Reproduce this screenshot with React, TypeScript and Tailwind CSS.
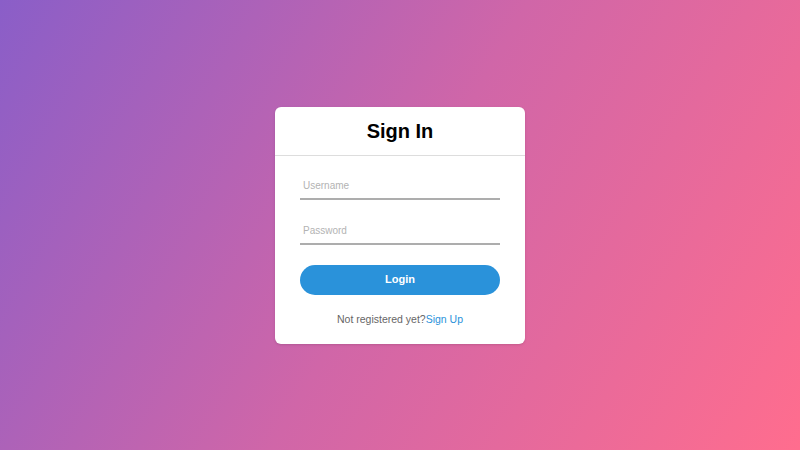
export default function App() {
  return (
    <div
      className="w-full h-[450px] flex items-center justify-center bg-[linear-gradient(120deg,#8a5ec8_0%,#d066a8_50%,#ff6d8e_100%)]"
      style={{ fontFamily: '"Liberation Sans", Arial, sans-serif' }}
    >
      <div className="w-[250px] bg-white rounded-md flex flex-col shadow-sm">
        <div className="h-[49px] flex items-center justify-center border-b border-[#dddddd]">
          <h1 className="text-[20px] font-bold text-black leading-none">Sign In</h1>
        </div>
        <div className="px-[25px] pt-[17px] pb-[19px] flex flex-col">
          <input
            type="text"
            placeholder="Username"
            className="h-[27px] w-full px-[3px] text-[10px] border-b-2 border-[#adadad] outline-none placeholder:text-[#b3b3b3] text-[#333]"
          />
          <input
            type="password"
            placeholder="Password"
            className="mt-[18px] h-[27px] w-full px-[3px] text-[10px] border-b-2 border-[#adadad] outline-none placeholder:text-[#b3b3b3] text-[#333]"
          />
          <button className="mt-[20px] h-[30px] w-full rounded-full bg-[#2a92da] text-white font-bold text-[11px]">
            Login
          </button>
          <p className="mt-[18px] text-center text-[10.5px] text-[#666666] leading-[12px]">
            Not registered yet?<a className="text-[#2a92da] cursor-pointer">Sign Up</a>
          </p>
        </div>
      </div>
    </div>
  );
}
